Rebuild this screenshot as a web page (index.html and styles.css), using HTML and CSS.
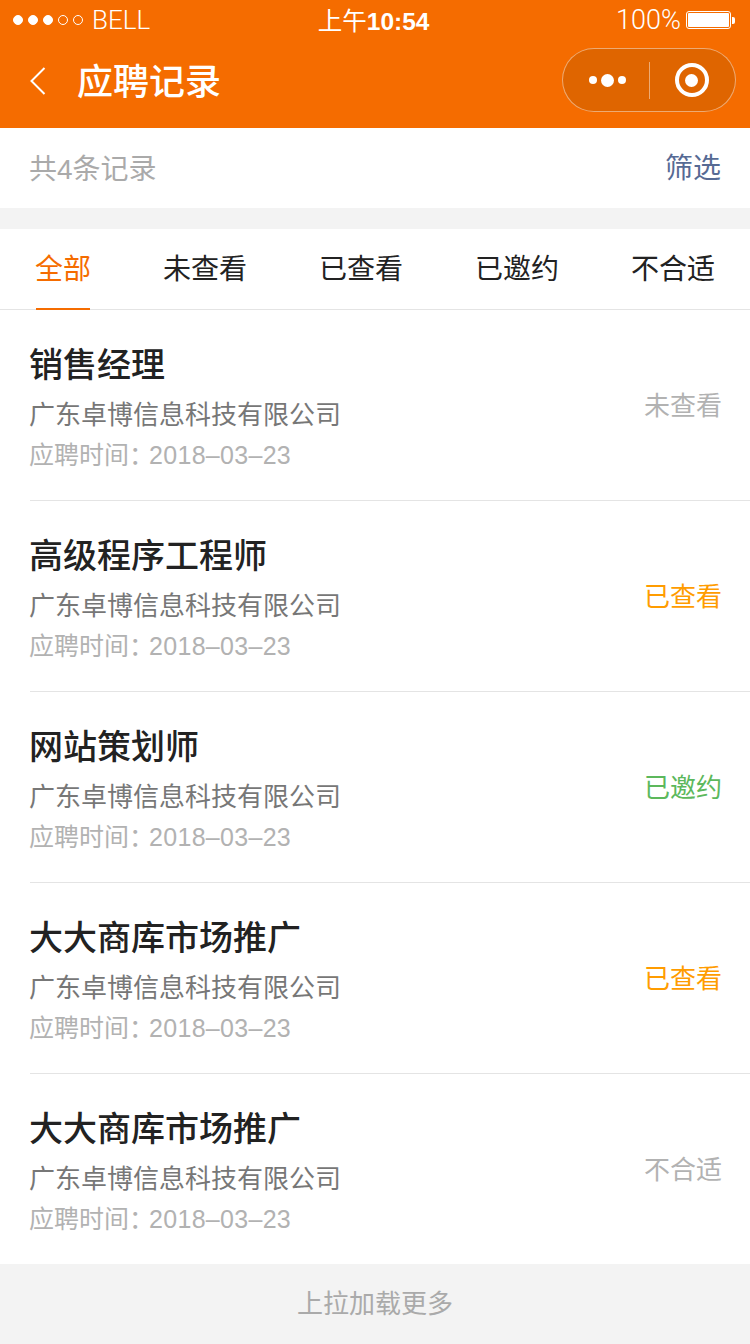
FILE: index.html
```html
<!DOCTYPE html>
<html lang="zh-CN">
<head>
    <meta charset="UTF-8">
    <meta name="viewport" content="width=device-width, initial-scale=1.0">
    <title>应聘记录</title>
    <link rel="stylesheet" href="styles.css">
</head>
<body>
    <header class="top">
        <div class="status-bar">
            <div class="status-left">
                <span class="signal">
                    <i class="dot on"></i><i class="dot on"></i><i class="dot on"></i><i class="dot"></i><i class="dot"></i>
                </span>
                <span class="carrier">BELL</span>
            </div>
            <div class="status-time"><span class="status-ampm">上午</span>10:54</div>
            <div class="status-right">
                <span class="percent">100%</span>
                <span class="battery"><span class="battery-fill"></span></span>
                <span class="battery-tip"></span>
            </div>
        </div>
        <div class="nav-bar">
            <svg class="back" width="16" height="28" viewBox="0 0 16 28">
                <path d="M14.5 1 L1.5 14 L14.5 27" fill="none" stroke="#fff" stroke-width="2"/>
            </svg>
            <h1 class="nav-title">应聘记录</h1>
            <div class="capsule">
                <div class="capsule-more">
                    <i class="more-dot"></i><i class="more-dot big"></i><i class="more-dot"></i>
                </div>
                <div class="capsule-line"></div>
                <div class="capsule-close"><i class="close-ring"><i class="close-core"></i></i></div>
            </div>
        </div>
    </header>

    <div class="summary">
        <span class="summary-count">共4条记录</span>
        <span class="summary-filter">筛选</span>
    </div>

    <nav class="tabs">
        <span class="tab active">全部</span>
        <span class="tab">未查看</span>
        <span class="tab">已查看</span>
        <span class="tab">已邀约</span>
        <span class="tab">不合适</span>
    </nav>

    <ul class="records">
        <li class="record">
            <div class="record-info">
                <h3 class="record-job">销售经理</h3>
                <p class="record-company">广东卓博信息科技有限公司</p>
                <p class="record-date">应聘时间：<span class="record-day">2018–03–23</span></p>
            </div>
            <span class="record-status unread">未查看</span>
        </li>
        <li class="record">
            <div class="record-info">
                <h3 class="record-job">高级程序工程师</h3>
                <p class="record-company">广东卓博信息科技有限公司</p>
                <p class="record-date">应聘时间：<span class="record-day">2018–03–23</span></p>
            </div>
            <span class="record-status read">已查看</span>
        </li>
        <li class="record">
            <div class="record-info">
                <h3 class="record-job">网站策划师</h3>
                <p class="record-company">广东卓博信息科技有限公司</p>
                <p class="record-date">应聘时间：<span class="record-day">2018–03–23</span></p>
            </div>
            <span class="record-status invited">已邀约</span>
        </li>
        <li class="record">
            <div class="record-info">
                <h3 class="record-job">大大商库市场推广</h3>
                <p class="record-company">广东卓博信息科技有限公司</p>
                <p class="record-date">应聘时间：<span class="record-day">2018–03–23</span></p>
            </div>
            <span class="record-status read">已查看</span>
        </li>
        <li class="record">
            <div class="record-info">
                <h3 class="record-job">大大商库市场推广</h3>
                <p class="record-company">广东卓博信息科技有限公司</p>
                <p class="record-date">应聘时间：<span class="record-day">2018–03–23</span></p>
            </div>
            <span class="record-status unread">不合适</span>
        </li>
    </ul>

    <footer class="load-more">上拉加载更多</footer>
</body>
</html>
```

FILE: styles.css
```css
* {
    box-sizing: border-box;
}
body {
    margin: 0;
    height: 1344px;
    overflow: hidden;
    font-family: "Liberation Sans", "Noto Sans CJK SC", sans-serif;
    color: #222;
    background-color: #f3f3f3;
}
.top {
    background-color: #f56c00;
    color: white;
    height: 128px;
}
.status-bar {
    height: 40px;
    display: flex;
    align-items: center;
    justify-content: space-between;
    padding: 0 15px 0 13px;
}
.status-left, .status-right {
    display: flex;
    align-items: center;
}
.signal {
    display: flex;
    gap: 5px;
    margin-right: 9px;
}
.dot {
    display: block;
    width: 10px;
    height: 10px;
    border-radius: 50%;
    border: 1px solid white;
}
.dot.on {
    background-color: white;
}
.carrier {
    font-family: Roboto, sans-serif;
    font-weight: 300;
    font-size: 26px;
}
.status-time {
    font-size: 24.5px;
    font-weight: bold;
    margin-left: -19px;
    margin-bottom: 2px;
}
.status-ampm {
    font-weight: normal;
}
.percent {
    font-family: Roboto, sans-serif;
    font-weight: 300;
    font-size: 27px;
    margin-right: 5px;
}
.battery {
    display: block;
    width: 45px;
    height: 18px;
    border: 1px solid white;
    border-radius: 3px;
    padding: 1px;
}
.battery-fill {
    display: block;
    height: 100%;
    background-color: white;
    border-radius: 1px;
}
.battery-tip {
    display: block;
    width: 3px;
    height: 7px;
    margin-left: 1px;
    background-color: white;
    border-radius: 0 2px 2px 0;
}
.nav-bar {
    height: 80px;
    display: flex;
    align-items: center;
    padding: 0 14px 0 30px;
}
.back {
    margin-top: 2px;
    margin-right: 31px;
}
.nav-title {
    margin: 0 0 3px;
    font-size: 36px;
    font-weight: 500;
    flex: 1;
}
.capsule {
    width: 174px;
    height: 64px;
    border: 1px solid rgba(255,255,255,0.45);
    border-radius: 32px;
    background-color: #df6500;
    display: flex;
    align-items: center;
}
.capsule-more {
    width: 86px;
    display: flex;
    align-items: center;
    justify-content: center;
    gap: 4px;
    padding-left: 3px;
}
.more-dot {
    display: block;
    width: 8px;
    height: 8px;
    border-radius: 50%;
    background-color: white;
}
.more-dot.big {
    width: 13px;
    height: 13px;
}
.capsule-line {
    width: 1px;
    height: 37px;
    background-color: rgba(255,255,255,0.45);
}
.capsule-close {
    flex: 1;
    display: flex;
    align-items: center;
    justify-content: center;
    padding-right: 2px;
}
.close-ring {
    width: 34px;
    height: 34px;
    border: 4px solid white;
    border-radius: 50%;
    display: flex;
    align-items: center;
    justify-content: center;
}
.close-core {
    display: block;
    width: 13px;
    height: 13px;
    border-radius: 50%;
    background-color: white;
}
.summary {
    height: 80px;
    background-color: white;
    display: flex;
    align-items: center;
    justify-content: space-between;
    padding: 0 29px 4px;
}
.summary-count {
    font-size: 28px;
    color: #aaa;
    margin-top: 2px;
}
.summary-filter {
    font-size: 28px;
    color: #566a94;
}
.tabs {
    margin-top: 21px;
    height: 81px;
    background-color: white;
    border-bottom: 1px solid #e4e4e4;
    display: flex;
    gap: 72px;
    padding-left: 35px;
}
.tab {
    font-size: 28px;
    line-height: 82px;
    height: 81px;
    white-space: nowrap;
    position: relative;
}
.tab.active {
    color: #f56c00;
}
.tab.active::after {
    content: "";
    position: absolute;
    left: 1px;
    bottom: 0;
    width: 54px;
    height: 2px;
    background-color: #f56c00;
}
.records {
    list-style: none;
    margin: 0;
    padding: 0 0 0 30px;
    background-color: white;
}
.record {
    height: 191px;
    border-bottom: 1px solid #e4e4e4;
    display: flex;
    align-items: center;
    justify-content: space-between;
    padding-right: 28px;
}
.record:last-child {
    height: 190px;
    border-bottom: none;
}
.record-info {
    margin-left: -1px;
}
.record-job {
    margin: 0;
    font-size: 34px;
    font-weight: 500;
    line-height: 50px;
}
.record-company {
    margin: 0;
    font-size: 26px;
    line-height: 50px;
    color: #777;
}
.record-date {
    margin: 0;
    font-size: 25px;
    line-height: 30px;
    color: #b2b2b2;
}
.record-day {
    margin-left: -5px;
    letter-spacing: 0.3px;
}
.record-status {
    font-size: 26px;
    margin-bottom: 4px;
}
.unread {
    color: #b2b2b2;
}
.read {
    color: #ff9c00;
}
.invited {
    color: #5cb85c;
}
.load-more {
    height: 80px;
    line-height: 81px;
    text-align: center;
    font-size: 26px;
    color: #aaa;
    background-color: #f3f3f3;
}
```
